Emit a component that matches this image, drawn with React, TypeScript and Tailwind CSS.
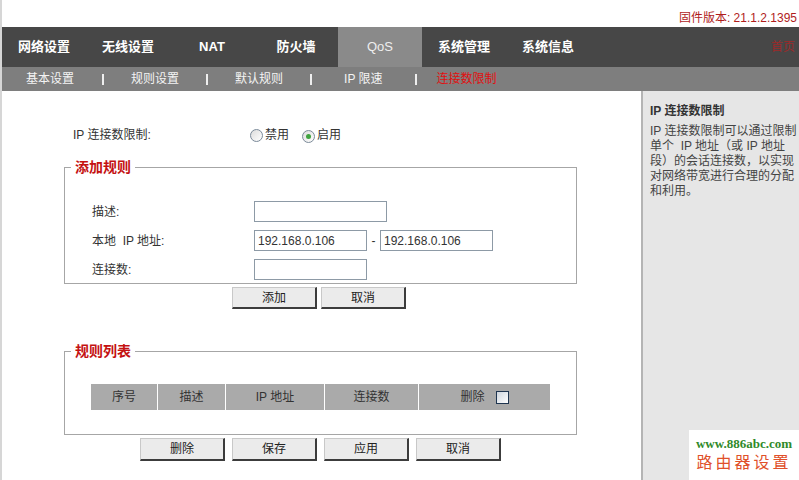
import React from 'react';

const font = "font-['Liberation_Sans','Noto_Sans_CJK_SC',sans-serif]";

const navItems = ['网络设置', '无线设置', 'NAT', '防火墙', 'QoS', '系统管理', '系统信息'];

// left margin before each sub item and before each separator, taken from the screenshot
const subItems = [
  { label: '基本设置', ml: 'ml-[24px]' },
  { label: '规则设置', ml: 'ml-[27px]', sep: 'ml-[28px]' },
  { label: '默认规则', ml: 'ml-[27px]', sep: 'ml-[27px]' },
  { label: 'IP 限速', ml: 'ml-[32px]', sep: 'ml-[27px]' },
  { label: '连接数限制', ml: 'ml-[20px]', sep: 'ml-[32px]' },
];

function Radio({ checked }: { checked?: boolean }) {
  return (
    <span className="inline-flex h-[13px] w-[13px] items-center justify-center rounded-full border border-[#7b8a99] bg-gradient-to-br from-[#dcdcdc] to-white">
      {checked && <span className="h-[5px] w-[5px] rounded-full bg-[#3fa33f]" />}
    </span>
  );
}

function Btn({ label, h = 'h-[22px]' }: { label: string; h?: string }) {
  return (
    <button
      className={`${h} w-[85px] border border-[#c8c8c8] border-r-2 border-b-2 border-r-[#3c3c3c] border-b-[#3c3c3c] bg-[#ebebeb] text-[12px] leading-none text-[#222]`}
    >
      {label}
    </button>
  );
}

function Field({ w, value }: { w: string; value?: string }) {
  return (
    <div className={`${w} flex h-[21px] items-center border border-[#8d9aa6] bg-white pl-[3px] text-[12px] text-[#333]`}>
      {value}
    </div>
  );
}

export default function App() {
  return (
    <div className={`${font} flex min-h-[480px] w-[799px] flex-col border-l-2 border-[#d6d6d6] bg-white text-[#333]`}>
      {/* top */}
      <div className="flex h-[27px] items-end justify-end pb-[3px] pr-[2px] text-[12px] leading-none text-[#b01c1c]">
        固件版本: 21.1.2.1395
      </div>

      {/* main nav */}
      <div className="flex h-[40px] bg-[#474747]">
        {navItems.map((n) => (
          <div
            key={n}
            className={`flex w-[84px] items-center justify-center text-[13px] ${
              n === 'QoS' ? 'bg-[#8a8a8a] text-[#eeeeee]' : 'font-bold text-white'
            }`}
          >
            {n}
          </div>
        ))}
        <div className="flex flex-1 items-center justify-end pr-[4px] text-[12px] text-[#9c2a2a]">首页</div>
      </div>

      {/* sub nav */}
      <div className="flex h-[24px] items-center bg-[#7e7e7e] text-[12px] text-[#f4f4f4]">
        {subItems.map((s, i) => (
          <React.Fragment key={s.label}>
            {s.sep && <span className={`${s.sep} h-[11px] w-[2px] bg-[#eeeeee]`} />}
            <span className={`${s.ml} whitespace-nowrap ${i === 4 ? 'text-[#e01010]' : ''}`}>{s.label}</span>
          </React.Fragment>
        ))}
      </div>

      {/* body */}
      <div className="flex flex-1">
        <div className="w-[639px] pl-[62px] pt-[34px]">
          <div className="flex h-[20px] items-center text-[12px]">
            <span className="ml-[9px] w-[177px]">IP 连接数限制:</span>
            <Radio />
            <span className="ml-[2px]">禁用</span>
            <span className="ml-[13px]"><Radio checked /></span>
            <span className="ml-[2px]">启用</span>
          </div>

          <fieldset className="mt-[12px] w-[513px] border border-[#a6a6a6] pb-[3px] pt-[24px]">
            <legend className="ml-[6px] px-[4px] text-[14px] font-bold leading-[20px] text-[#c41212]">添加规则</legend>
            <div className="flex flex-col gap-[8px] pl-[27px] text-[12px]">
              <div className="flex h-[21px] items-center">
                <span className="w-[162px]">描述:</span>
                <Field w="w-[133px]" />
              </div>
              <div className="flex h-[21px] items-center">
                <span className="w-[162px]">本地 &nbsp;IP 地址:</span>
                <Field w="w-[113px]" value="192.168.0.106" />
                <span className="w-[13px] text-center">-</span>
                <Field w="w-[113px]" value="192.168.0.106" />
              </div>
              <div className="flex h-[21px] items-center">
                <span className="w-[162px]">连接数:</span>
                <Field w="w-[113px]" />
              </div>
            </div>
          </fieldset>
          <div className="ml-[168px] mt-[3px] flex gap-[4px]">
            <Btn label="添加" />
            <Btn label="取消" />
          </div>

          <fieldset className="mt-[32px] w-[513px] border border-[#a6a6a6] pb-[24px] pt-[23px]">
            <legend className="ml-[6px] px-[4px] text-[14px] font-bold leading-[20px] text-[#c41212]">规则列表</legend>
            <div className="pl-[26px]">
              <div className="grid h-[26px] w-[458px] grid-cols-[66px_67px_98px_93px_131px] gap-x-[1px] bg-white text-[12px] text-[#333]">
                <div className="flex items-center justify-center bg-[#aaaaaa]">序号</div>
                <div className="flex items-center justify-center bg-[#aaaaaa]">描述</div>
                <div className="flex items-center justify-center bg-[#aaaaaa]">IP 地址</div>
                <div className="flex items-center justify-center bg-[#aaaaaa]">连接数</div>
                <div className="flex items-center justify-center gap-[11px] bg-[#aaaaaa]">
                  <span>删除</span>
                  <span className="h-[13px] w-[13px] border border-[#1f3550] bg-gradient-to-br from-[#cfd6de] to-white" />
                </div>
              </div>
            </div>
          </fieldset>
          <div className="ml-[76px] mt-[3px] flex gap-[7px]">
            <Btn label="删除" h="h-[23px]" />
            <Btn label="保存" h="h-[23px]" />
            <Btn label="应用" h="h-[23px]" />
            <Btn label="取消" h="h-[23px]" />
          </div>
        </div>

        {/* help panel */}
        <div className="relative flex-1 border-l-2 border-[#b4b4b4] bg-[#e6e6e6] pl-[7px] pt-[12px] text-[12px]">
          <div className="font-bold leading-[16px] text-[#333]">IP 连接数限制</div>
          <div className="mt-[5px] leading-[15px] text-[#444]">
            IP 连接数限制可以通过限制<br />
            单个 &nbsp;IP 地址（或 IP 地址<br />
            段）的会话连接数，以实现<br />
            对网络带宽进行合理的分配<br />
            和利用。
          </div>

          <div className="absolute bottom-0 right-0 flex h-[50px] w-[110px] flex-col items-center justify-center bg-white">
            <span className="font-['Liberation_Serif',serif] text-[13px] font-bold leading-[16px] text-[#2f8a2a]">
              www.886abc.com
            </span>
            <span className="text-[16px] leading-[22px] tracking-[3px] text-[#e0502a]">路由器设置</span>
          </div>
        </div>
      </div>
    </div>
  );
}
